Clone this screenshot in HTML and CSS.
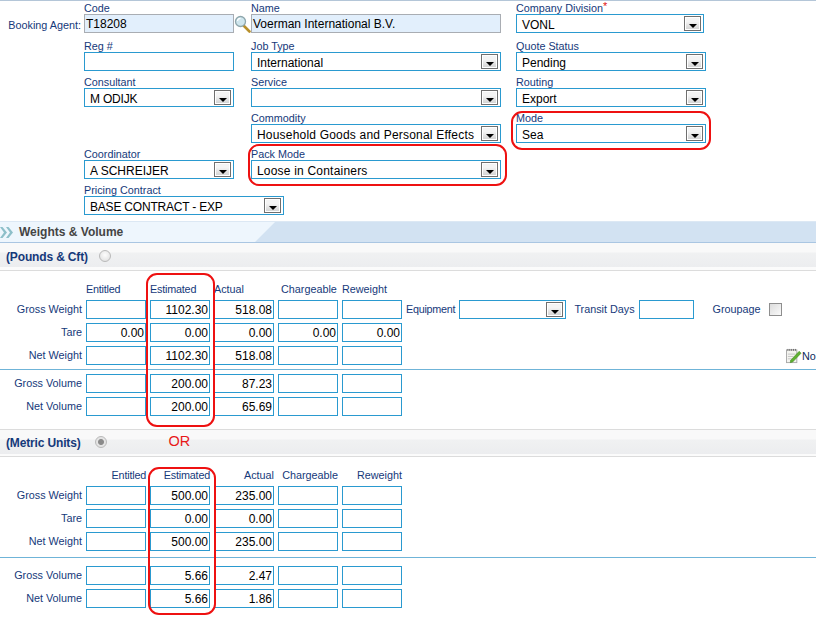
FILE: index.html
```html
<!DOCTYPE html>
<html lang="en">
<head>
<meta charset="utf-8">
<title>Quote</title>
<link rel="stylesheet" href="styles.css">
</head>
<body>
<div class="page">
  <div class="form">
    <div class="agent">Booking Agent:</div>
    <div class="cell"><label>Code</label><div class="lookup"><div class="box ro w150">T18208</div>
      <svg class="glass" width="18" height="18" viewBox="0 0 18 18"><path d="M9.500 10.500L15.500 16.500" stroke="#b8902c" stroke-width="2.600" stroke-linecap="round"/><circle cx="6.500" cy="6.500" r="5" fill="#cfe6ee" stroke="#8ea6ac" stroke-width="1.300"/><path d="M3.500 6a3 3 0 0 1 3-2.600" stroke="#fff" stroke-width="1.200" fill="none"/></svg></div></div>
    <div class="cell"><label>Name</label><div class="box ro w250">Voerman International B.V.</div></div>
    <div class="cell"><label>Company Division<span class="req">*</span></label><div class="box sel w188"><span>VONL</span><i class="arrow"></i></div></div>

    <div class="cell c2"><label>Reg #</label><div class="box w150"></div></div>
    <div class="cell"><label>Job Type</label><div class="box sel w250"><span>International</span><i class="arrow"></i></div></div>
    <div class="cell"><label>Quote Status</label><div class="box sel w190"><span>Pending</span><i class="arrow"></i></div></div>

    <div class="cell c2"><label>Consultant</label><div class="box sel w150"><span class="narrow">M ODIJK</span><i class="arrow"></i></div></div>
    <div class="cell"><label>Service</label><div class="box sel w250"><span></span><i class="arrow"></i></div></div>
    <div class="cell"><label>Routing</label><div class="box sel w190"><span>Export</span><i class="arrow"></i></div></div>

    <div class="cell c3"><label>Commodity</label><div class="box sel w250"><span class="wide">Household Goods and Personal Effects</span><i class="arrow"></i></div></div>
    <div class="cell"><label>Mode</label><div class="box sel w190"><span>Sea</span><i class="arrow"></i></div></div>

    <div class="cell c2"><label>Coordinator</label><div class="box sel w150"><span>A SCHREIJER</span><i class="arrow"></i></div></div>
    <div class="cell"><label>Pack Mode</label><div class="box sel w250"><span class="wide">Loose in Containers</span><i class="arrow"></i></div></div>

    <div class="cell c2 span2"><label>Pricing Contract</label><div class="box sel w200"><span class="narrow">BASE CONTRACT - EXP</span><i class="arrow"></i></div></div>
  </div>

  <div class="section">
    <svg class="chev" width="13" height="11" viewBox="0 0 13 11"><path d="M0 0h2.500L7 5.500 2.500 11H0l4-5.500zM6 0h2.500L13 5.500 8.500 11H6l4-5.500z" fill="#8dbfc9"/></svg>
    <span>Weights &amp; Volume</span>
  </div>

  <div class="sub"><b>(Pounds &amp; Cft)</b><i class="radio r-pounds"></i></div>

  <div class="grid g-head">
    <div class="hd tight">Entitled</div><div class="hd tight">Estimated</div><div class="hd">Actual</div><div class="hd off3">Chargeable</div><div class="hd">Reweight</div>
    <div class="lb">Gross Weight</div><div class="box num"></div><div class="box num">1102.30</div><div class="box num">518.08</div><div class="box num"></div><div class="box num"></div>
    <div class="extra">
      <span class="tx tx-equip">Equipment</span><div class="box sel w107"><span></span><i class="arrow"></i></div>
      <span class="tx tx-transit">Transit Days</span><div class="box w55"></div>
      <span class="tx tx-group">Groupage</span><i class="check"></i>
    </div>
    <div class="lb">Tare</div><div class="box num">0.00</div><div class="box num">0.00</div><div class="box num">0.00</div><div class="box num">0.00</div><div class="box num">0.00</div><div></div>
    <div class="lb">Net Weight</div><div class="box num"></div><div class="box num">1102.30</div><div class="box num">518.08</div><div class="box num"></div><div class="box num"></div>
    <div class="note">
      <svg width="16" height="16" viewBox="0 0 17 16"><rect x="0.500" y="1.500" width="11" height="13.500" fill="#f4f4f0" stroke="#a8a8a8"/><path d="M2 0.500v2M4 0.500v2M6 0.500v2M8 0.500v2M10 0.500v2" stroke="#666"/><path d="M2 6h8M2 8.500h6M2 11h5" stroke="#c4c4c4"/><path d="M5 12.500L14 3l2 2-9 9.500-2.500 .5z" fill="#5fb030" stroke="#3c8a1c" stroke-width=".6"/></svg>
      <span>No</span>
    </div>
  </div>
  <div class="rule rule-a"></div>
  <div class="grid">
    <div class="lb">Gross Volume</div><div class="box num"></div><div class="box num">200.00</div><div class="box num">87.23</div><div class="box num"></div><div class="box num"></div><div></div>
    <div class="lb">Net Volume</div><div class="box num"></div><div class="box num">200.00</div><div class="box num">65.69</div><div class="box num"></div><div class="box num"></div><div></div>
  </div>

  <div class="sub sub-second"><b>(Metric Units)</b><i class="radio r-metric"></i><span class="or">OR</span></div>

  <div class="grid g-head g-metric">
    <div class="hd r tight">Entitled</div><div class="hd r tight">Estimated</div><div class="hd r">Actual</div><div class="hd r">Chargeable</div><div class="hd r">Reweight</div>
    <div class="lb">Gross Weight</div><div class="box num"></div><div class="box num">500.00</div><div class="box num">235.00</div><div class="box num"></div><div class="box num"></div><div></div>
    <div class="lb">Tare</div><div class="box num"></div><div class="box num">0.00</div><div class="box num">0.00</div><div class="box num"></div><div class="box num"></div><div></div>
    <div class="lb">Net Weight</div><div class="box num"></div><div class="box num">500.00</div><div class="box num">235.00</div><div class="box num"></div><div class="box num"></div><div></div>
  </div>
  <div class="rule rule-b"></div>
  <div class="grid">
    <div class="lb">Gross Volume</div><div class="box num"></div><div class="box num">5.66</div><div class="box num">2.47</div><div class="box num"></div><div class="box num"></div><div></div>
    <div class="lb">Net Volume</div><div class="box num"></div><div class="box num">5.66</div><div class="box num">1.86</div><div class="box num"></div><div class="box num"></div><div></div>
  </div>

  <div class="oval o-pack"></div>
  <div class="oval o-mode"></div>
  <div class="oval o-est1"></div>
  <div class="oval o-est2"></div>
</div>
</body>
</html>
```
FILE: styles.css
```css
* { box-sizing: border-box; }
html, body { margin: 0; padding: 0; background: #fff; overflow: hidden; }
.page {
  position: relative;
  width: 816px;
  height: 618px;
  overflow: hidden;
  border-top: 1px solid #b4c6d8;
  font-family: "Liberation Sans", Arial, sans-serif;
  font-size: 10.800px;
  color: #15397a;
}

/* top form */
.form {
  display: grid;
  grid-template-columns: 84px 167px 265px 1fr;
  grid-template-rows: 34px repeat(5, 32px);
  row-gap: 4px;
  height: 214px;
}
.cell { display: flex; flex-direction: column; min-width: 0; }
.cell label { display: block; height: 13px; line-height: 14px; white-space: nowrap; }
.c2 { grid-column: 2; }
.c3 { grid-column: 3; }
.span2 { grid-column: 2 / span 2; }
.agent { align-self: start; margin-top: 17px; padding-right: 3px; text-align: right; white-space: nowrap; line-height: 14px; }
.req { color: #e01010; font-size: 11px; line-height: 10px; vertical-align: 2px; }
.lookup { display: flex; }
.glass { flex: none; margin-top: 1px; }

.box {
  height: 19px;
  border: 1px solid #2a9ad0;
  background: #fff;
  color: #000;
  font-size: 12px;
  line-height: 19px;
  white-space: nowrap;
  overflow: hidden;
}
.ro { border-color: #a9adb3; background: #e2effc; padding-left: 1px; }
.sel { display: flex; align-items: center; justify-content: space-between; padding: 0 2px 0 5px; }
.sel span { line-height: 18px; padding-top: 3px; }
.sel .wide { letter-spacing: .2px; }
.sel .narrow { letter-spacing: -.2px; }
.w150 { width: 150px; flex: none; }
.w250 { width: 250px; }
.w188 { width: 188px; }
.w190 { width: 190px; }
.w200 { width: 200px; }
.w107 { width: 107px; flex: none; }
.w55 { width: 55px; flex: none; }

.arrow {
  position: relative;
  flex: none;
  display: block;
  width: 17px;
  height: 15px;
  border: 1px solid #6f6f6f;
  box-shadow: inset 0 0 0 1px #fff;
  background: linear-gradient(#f4f4f4 0 35%, #d0d0d0 100%);
}
.arrow::after {
  content: "";
  position: absolute;
  left: 4px;
  top: 7px;
  border-left: 4px solid transparent;
  border-right: 4px solid transparent;
  border-top: 4px solid #000;
}

/* section header */
.section {
  display: flex;
  align-items: center;
  height: 22px;
  margin-top: 6px;
  border-top: 1px solid #dce8f4;
  border-bottom: 1px solid #aac6e2;
  background: linear-gradient(135deg, #eef6fd 194px, #d2e2f2 195px);
  font-size: 12px;
  font-weight: bold;
  color: #444;
}
.chev { margin: 0 6px 0 0; flex: none; }

.sub {
  display: flex;
  align-items: center;
  height: 28px;
  padding-left: 6px;
  border-bottom: 1px solid #dcdcdc;
  background: linear-gradient(#f9f9f9 0 9px, #f0f1f2 10px, #ecedef 24px, #fbfbfb 24px);
  font-size: 12px;
}
.sub b { color: #15397a; letter-spacing: -.15px; }
.sub-second { margin-top: 13px; border-top: 1px solid #dcdcdc; }
.radio {
  flex: none;
  display: block;
  width: 12px;
  height: 12px;
  border-radius: 50%;
  border: 1px solid #b9b9b9;
  background: radial-gradient(circle at 50% 40%, #fdfdfd, #dcdcdc);
  margin-bottom: 1px;
}
.r-pounds { margin-left: 11px; }
.r-metric { margin-left: 14px; margin-bottom: 3px; background: radial-gradient(circle, #8a8a8a 0 2.500px, #e4e4e4 3.500px); }
.or { margin-left: 62px; font-size: 14.500px; color: #e81818; margin-bottom: 4px; }

/* numeric grid */
.grid {
  display: grid;
  grid-template-columns: 82px repeat(5, 60px) 1fr;
  column-gap: 4px;
  row-gap: 4px;
  grid-auto-rows: 19px;
}
.g-head { grid-template-rows: 13px; margin-top: 12px; }
.hd { line-height: 13px; white-space: nowrap; }
.tight { letter-spacing: -.2px; }
.g-head > .hd:first-child { grid-column: 2; }
.hd.r { text-align: right; }
.off3 { margin-left: 3px; }
.lb { grid-column: 1; text-align: right; line-height: 19px; white-space: nowrap; }
.num { text-align: right; padding-right: 1px; }

.extra { display: flex; align-items: center; min-width: 0; }
.tx { white-space: nowrap; padding-bottom: 1px; }
.tx-equip { letter-spacing: -.25px; }
.extra .box { margin-left: 4px; }
.tx-transit { margin-left: 8px; }
.tx-group { margin-left: 19px; }
.check {
  flex: none;
  display: block;
  width: 13px;
  height: 13px;
  margin-left: 8px;
  border: 1px solid #8e8e8e;
  background: linear-gradient(135deg, #dcdcdc, #fafafa);
}
.note {
  display: flex;
  align-items: center;
  margin-left: 380px;
  font-size: 10.800px;
  color: #0c2a5c;
  white-space: nowrap;
}
.rule { height: 1px; background: #6fb4d8; }
.rule-a { margin: 4px 0; }
.rule-b { margin: 6px 0 8px; }

/* hand-drawn annotations on top of the form */
.oval { position: absolute; border: 2px solid #ee1111; border-radius: 11px; }
.o-pack { left: 248px; top: 143px; width: 259px; height: 42px; }
.o-mode { left: 511px; top: 110px; width: 200px; height: 39px; }
.o-est1 { left: 146px; top: 272px; width: 69px; height: 154px; }
.o-est2 { left: 148px; top: 466px; width: 68px; height: 148px; }
```
